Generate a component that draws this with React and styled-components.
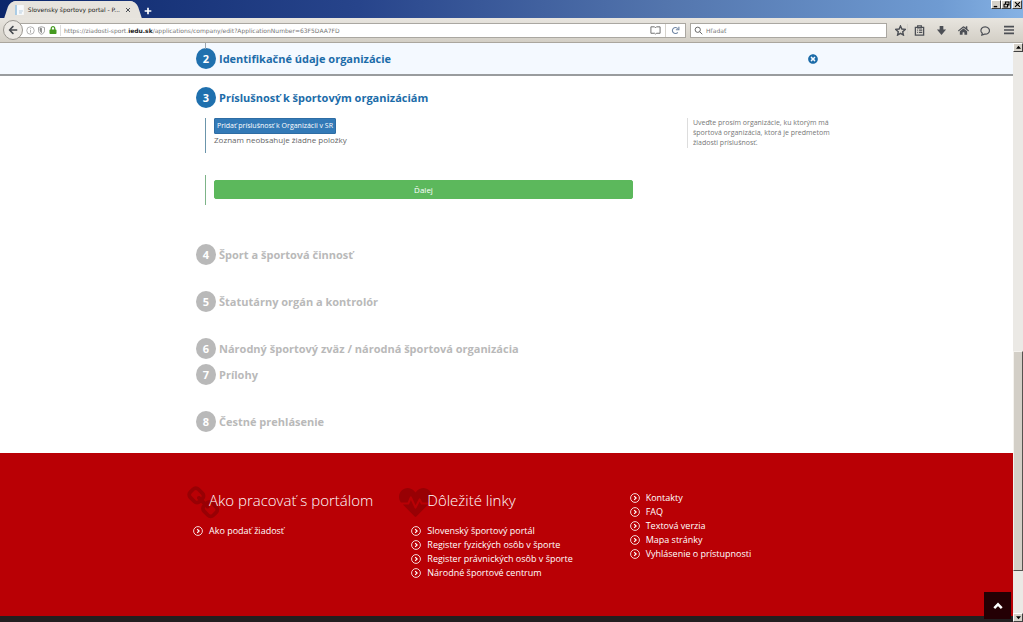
import React, { useState } from "react";
import styled, { createGlobalStyle, css } from "styled-components";
import {
  FaArrowLeft,
  FaHeartbeat,
  FaHome,
  FaLock,
  FaTimesCircle,
} from "react-icons/fa";

const GlobalStyle = createGlobalStyle`
  * {
    box-sizing: border-box;
  }

  body {
    margin: 0;
    background: #fff;
    font-family: "Open Sans", sans-serif;
    font-size: 8px;
    color: #666;
  }

  button, input {
    font-family: inherit;
    margin: 0;
  }
`;

const chromeFont = css`
  font-family: "DejaVu Sans", sans-serif;
  font-size: 6px;
`;

const URL_PARTS = [
  "https://ziadosti-sport.",
  "iedu.sk",
  "/applications/company/edit?ApplicationNumber=63F5DAA7FD",
];

const LOCKED_STEPS = [
  { number: 4, title: "Šport a športová činnosť" },
  { number: 5, title: "Štatutárny orgán a kontrolór" },
  { number: 6, title: "Národný športový zväz / národná športová organizácia" },
  { number: 7, title: "Prílohy", tight: true },
  { number: 8, title: "Čestné prehlásenie" },
];

const PORTAL_LINKS = ["Ako podať žiadosť"];

const IMPORTANT_LINKS = [
  "Slovenský športový portál",
  "Register fyzických osôb v športe",
  "Register právnických osôb v športe",
  "Národné športové centrum",
];

const SITE_LINKS = [
  "Kontakty",
  "FAQ",
  "Textová verzia",
  "Mapa stránky",
  "Vyhlásenie o prístupnosti",
];

/* Browser window */

const Window = styled.div`
  display: flex;
  flex-direction: column;
  height: 100vh;
  overflow: hidden;
`;

const TitleBar = styled.div`
  display: flex;
  align-items: flex-end;
  height: 18px;
  padding-left: 10px;
  flex: none;
  background: linear-gradient(to right, #0c276b, #27448b 35%, #5375ad 65%, #6f9bd2 92%, #86b2e4);
`;

const Tab = styled.div`
  position: relative;
  display: flex;
  align-items: center;
  gap: 4px;
  width: 126px;
  height: 17px;
  padding: 0 4px 0 5px;
  color: #222;
  background: #e6e3dd;
  border-radius: 6px 6px 0 0;
  ${chromeFont}

  &::before,
  &::after {
    content: "";
    position: absolute;
    bottom: 0;
    width: 12px;
    height: 17px;
    background: #e6e3dd;
  }

  &::before {
    left: -3px;
    border-top-left-radius: 6px;
    transform: skewX(-18deg);
  }

  &::after {
    right: -3px;
    border-top-right-radius: 6px;
    transform: skewX(18deg);
  }

  > * {
    position: relative;
    z-index: 1;
  }
`;

const TabTitle = styled.span`
  flex: 1;
  white-space: nowrap;
`;

const IconButton = styled.button`
  display: flex;
  align-items: center;
  justify-content: center;
  flex: none;
  width: ${(props) => props.$width || 12}px;
  height: 14px;
  padding: 0;
  border: 0;
  background: none;
  color: ${(props) => props.$color || "#4c4f55"};

  svg {
    display: block;
  }
`;

const WindowButtons = styled.div`
  display: flex;
  align-self: flex-start;
  margin-left: auto;
  padding-right: 1px;
`;

const WindowButton = styled.button`
  display: flex;
  align-items: center;
  justify-content: center;
  width: 10px;
  height: 9px;
  padding: 0;
  border: 1px solid;
  border-color: #fff #404040 #404040 #fff;
  background: #d6d2ca;

  &:last-child {
    margin-left: 1px;
  }
`;

const ScrollButton = styled(WindowButton)`
  &:last-child {
    margin-left: 0;
  }
`;

const Toolbar = styled.div`
  display: flex;
  align-items: center;
  height: 25px;
  padding: 0 1px 0 3px;
  flex: none;
  background: linear-gradient(#e8e5df, #d3cfc6);
  border-bottom: 1px solid #aaa69e;
`;

const BackButton = styled.button`
  display: flex;
  align-items: center;
  justify-content: center;
  position: relative;
  z-index: 1;
  flex: none;
  width: 20px;
  height: 20px;
  padding: 0;
  border: 1px solid #999690;
  border-radius: 50%;
  background: #ece9e4;
  color: #45494f;
`;

const AddressBar = styled.div`
  display: flex;
  align-items: center;
  flex: 1;
  height: 15px;
  margin-left: -4px;
  padding-left: 5px;
  border: 1px solid #aaa7a1;
  background: #fff;
`;

const AddressField = styled.div`
  display: grid;
  align-items: center;
  flex: 1;
  height: 11px;
  margin-left: 2px;
  padding-left: 3px;
  border-left: 1px solid #ddd;
  color: #777;
  ${chromeFont}

  > * {
    grid-area: 1 / 1;
  }
`;

const BareInput = styled.input`
  flex: 1;
  width: 100%;
  min-width: 0;
  padding: 0;
  border: 0;
  outline: 0;
  background: none;
  color: #555;
  font-size: inherit;

  &::placeholder {
    color: #777;
    opacity: 1;
  }
`;

const AddressText = styled.span`
  pointer-events: none;
  white-space: nowrap;

  strong {
    color: #222;
    font-weight: 600;
  }
`;

const SearchBar = styled.label`
  display: flex;
  align-items: center;
  gap: 3px;
  width: 197px;
  height: 15px;
  margin: 0 6px 0 4px;
  padding-left: 3px;
  border: 1px solid #aaa7a1;
  background: #fff;
  ${chromeFont}
`;

const Divider = styled.span`
  width: 1px;
  height: 13px;
  background: #d5d2cc;
`;

const ToolbarIcons = styled.div`
  display: flex;
  align-items: center;
`;

const Content = styled.div`
  display: grid;
  grid-template-columns: minmax(0, 1fr) 10px;
  flex: 1;
  min-height: 0;
`;

const Scrollbar = styled.div`
  display: flex;
  flex-direction: column;
  background: #ebe9e5;
`;

const ScrollTrack = styled.div`
  display: grid;
  grid-template-rows: 299fr 220fr 42fr;
  flex: 1;
`;

const ScrollThumb = styled.div`
  grid-row: 2;
  border: 1px solid;
  border-color: #f4f2ee #55534f #55534f #f4f2ee;
  background: #d3cfc7;
`;

/* Page */

const Page = styled.div`
  position: relative;
  display: flex;
  flex-direction: column;
  min-height: 0;
  overflow: hidden;
`;

const Container = styled.div`
  width: 100%;
  max-width: 655px;
  margin: 0 auto;
`;

const DoneStep = styled.section`
  flex: none;
  padding: 5px 0;
  background: #f4f9ff;
  border-bottom: 2px solid #999c9e;

  ${Container} {
    position: relative;
    display: flex;
    align-items: center;
    justify-content: space-between;
    padding-right: 16px;
  }

  ${Container}::before {
    content: "";
    position: absolute;
    top: -5px;
    left: 26px;
    width: 1px;
    height: 6px;
    background: #9aa5b0;
  }
`;

const StepHead = styled.div`
  display: flex;
  align-items: center;
  gap: 3px;
  height: 21px;
  padding-left: 17px;
  color: ${(props) => (props.$locked ? "#b9b9b9" : "#1c6ca9")};
`;

const StepNumber = styled.span`
  width: 20px;
  height: 21px;
  border-radius: 50%;
  background: ${(props) => (props.$locked ? "#b9b9b9" : "#1f70ae")};
  color: #fff;
  font-size: 11px;
  font-weight: 700;
  line-height: 21px;
  text-align: center;
`;

const StepTitle = styled.h2`
  margin: 0;
  font-size: 11px;
  font-weight: 700;
  line-height: 21px;
`;

const ActiveStep = styled.section`
  padding: 11px 0 13px;
`;

const StepBody = styled.div`
  display: grid;
  grid-template-columns: minmax(0, 1fr) 147px;
  gap: 22px 54px;
  margin-top: 10px;
  padding-left: 26px;
`;

const Fields = styled.div`
  min-height: ${(props) => (props.$final ? 30 : 35)}px;
  padding: ${(props) => (props.$final ? "5px 0 6px 8px" : "0 0 0 8px")};
  border-left: 1px solid ${(props) => (props.$final ? "#7db488" : "#6b95ab")};
`;

const Button = styled.button`
  display: block;
  padding: 0 2px;
  border: 1px solid #2e6da4;
  border-radius: 1px;
  background: #337ab7;
  color: #fff;
  font-size: 7px;
  line-height: 14px;

  ${(props) =>
    props.$wide &&
    css`
      width: 100%;
      border-color: #5cb85c;
      border-radius: 2px;
      background: #5cb85c;
      font-size: 8px;
      line-height: 17px;
    `}
`;

const EmptyNote = styled.p`
  margin: 0;
  line-height: 12px;
`;

const Help = styled.aside`
  align-self: start;
  padding-left: 5px;
  border-left: 1px solid #ddd;
  color: #777;
  font-size: 7px;
  line-height: 10px;
`;

const LockedSteps = styled.div`
  padding-bottom: 21px;
`;

const LockedStep = styled.section`
  padding-top: ${(props) => (props.$tight ? 5 : 26)}px;
`;

const Footer = styled.footer`
  flex: none;
  height: 163px;
  padding-top: 36px;
  background: #b90005;
  color: #fff;

  ${Container} {
    display: grid;
    grid-template-columns: repeat(3, 1fr);
  }
`;

const FooterTitle = styled.h3`
  position: relative;
  margin: 0 0 13px;
  padding-left: 30px;
  font-size: 15px;
  font-weight: 300;
  line-height: 22px;
  white-space: nowrap;

  svg {
    position: absolute;
    top: -3px;
    left: ${(props) => props.$iconLeft}px;
    color: #980004;
  }

  span {
    position: relative;
  }
`;

const LinkList = styled.ul`
  margin: 0;
  padding: ${(props) => (props.$untitled ? "2px 0 0 14px" : "0 0 0 14px")};
  list-style: none;
`;

const FooterLink = styled.a`
  display: flex;
  align-items: center;
  gap: 6px;
  color: #fff;
  font-size: 9px;
  line-height: 14px;
  text-decoration: none;
`;

const BottomBar = styled.div`
  flex: 1;
  background: #231f20;
`;

const ScrollTop = styled.button`
  position: absolute;
  right: 2px;
  bottom: 3px;
  display: flex;
  align-items: center;
  justify-content: center;
  width: 27px;
  height: 27px;
  padding: 0;
  border: 0;
  background: #240004;
  color: #fff;
`;

function Stroke({ size = 10, width = 1, view = 12, children }) {
  return (
    <svg
      width={size}
      height={size}
      viewBox={`0 0 ${view} ${view}`}
      fill="none"
      stroke="currentColor"
      strokeWidth={width}
      aria-hidden="true"
    >
      {children}
    </svg>
  );
}

function ChainIcon() {
  return (
    <svg width="35" height="35" viewBox="0 0 1792 1792" fill="currentColor" aria-hidden="true">
      <path d="M1456 1216q0-40-28-68l-208-208q-28-28-68-28-42 0-72 32 3 3 19 18.500t21.500 21.500 15 19 13 25.500 3.500 27.500q0 40-28 68t-68 28q-15 0-27.500-3.500t-25.500-13-19-15-21.500-21.500-18.500-19q-33 31-33 73 0 40 28 68l206 207q27 27 68 27 40 0 68-26l147-146q28-28 28-67zm-703-705q0-40-28-68l-206-207q-28-28-68-28-39 0-68 27l-147 146q-28 28-28 67 0 40 28 68l208 208q27 27 68 27 42 0 72-31-3-3-19-18.500t-21.500-21.500-15-19-13-25.500-3.500-27.500q0-40 28-68t68-28q15 0 27.500 3.500t25.500 13 19 15 21.500 21.500 18.500 19q33-31 33-73zm895 705q0 120-85 203l-147 146q-83 83-203 83-121 0-204-85l-206-207q-83-83-83-203 0-123 88-209l-88-88q-86 88-208 88-120 0-204-84l-208-208q-84-84-84-204t85-203l147-146q83-83 203-83 121 0 204 85l206 207q83 83 83 203 0 123-88 209l88 88q86-88 208-88 120 0 204 84l208 208q84 84 84 204z" />
    </svg>
  );
}

function AddressInput() {
  const [editing, setEditing] = useState(false);
  const [url, setUrl] = useState(URL_PARTS.join(""));

  return (
    <AddressField>
      <BareInput
        aria-label="Adresa"
        value={editing ? url : ""}
        onChange={(e) => setUrl(e.target.value)}
        onFocus={() => setEditing(true)}
        onBlur={() => setEditing(false)}
      />
      {!editing && (
        <AddressText>
          {URL_PARTS[0]}
          <strong>{URL_PARTS[1]}</strong>
          {URL_PARTS[2]}
        </AddressText>
      )}
    </AddressField>
  );
}

function BrowserHeader() {
  return (
    <>
      <TitleBar>
        <Tab>
          <svg width="9" height="10" viewBox="0 0 9 10" aria-hidden="true">
            <path d="M0 0h9v10H0z" fill="#f8fafc" />
            <path d="M0 0h2v10H0z" fill="#a9cbe4" />
            <path d="M4 6h4M4 8h3" stroke="#b5cbdc" />
          </svg>
          <TabTitle>Slovensky športovy portal - P...</TabTitle>
          <IconButton $width={8} aria-label="Zavrieť kartu">
            <Stroke size={6} width={2}><path d="M2 2l8 8M10 2l-8 8" /></Stroke>
          </IconButton>
        </Tab>
        <IconButton $width={24} $color="#fff" aria-label="Nová karta">
          <Stroke size={8} width={2.5}><path d="M6 1v10M1 6h10" /></Stroke>
        </IconButton>
        <WindowButtons>
          <WindowButton aria-label="Minimalizovať">
            <Stroke size={7} width={2} view={10}><path d="M1 8h5" stroke="#000" /></Stroke>
          </WindowButton>
          <WindowButton aria-label="Obnoviť">
            <Stroke size={7} width={1.5} view={10}>
              <path d="M3.500 4V1.500h5v4H7M1.500 4.500h5v4h-5z" stroke="#000" />
            </Stroke>
          </WindowButton>
          <WindowButton aria-label="Zavrieť">
            <Stroke size={7} width={1.6} view={10}><path d="M1.500 1.500l7 7M8.500 1.500l-7 7" stroke="#000" /></Stroke>
          </WindowButton>
        </WindowButtons>
      </TitleBar>
      <Toolbar>
        <BackButton aria-label="Späť"><FaArrowLeft size={10} /></BackButton>
        <AddressBar>
          <IconButton $width={11} $color="#999" aria-label="Informácie o stránke">
            <Stroke size={9}><circle cx="6" cy="6" r="5" /><path d="M6 5v4M6 3v1" /></Stroke>
          </IconButton>
          <IconButton $width={11} $color="#858585" aria-label="Ochrana">
            <Stroke size={9}>
              <path d="M6 1l4 1v4c0 2-1 4-4 5-3-1-4-3-4-5V2z" />
              <path d="M6 3v6c-1-1-2-2-2-4V3z" fill="currentColor" />
            </Stroke>
          </IconButton>
          <IconButton $width={11} $color="#459a20" aria-label="Zabezpečené">
            <FaLock size={8} />
          </IconButton>
          <AddressInput />
          <IconButton $width={20} $color="#666" aria-label="Čítačka">
            <Stroke size={11}><path d="M6 3L5 2H1v7h4l1 1 1-1h4V2H7L6 3" /></Stroke>
          </IconButton>
          <Divider />
          <IconButton $width={19} $color="#7187a5" aria-label="Obnoviť stránku">
            <Stroke size={9} width={1.5}><path d="M9 8.500A4 4 0 1 1 9 3.500M10.500 1v4h-4" /></Stroke>
          </IconButton>
        </AddressBar>
        <SearchBar>
          <Stroke size={9} width={1.3}><circle cx="5" cy="5" r="3.500" /><path d="M7.500 7.500L11 11" /></Stroke>
          <BareInput aria-label="Hľadať" placeholder="Hľadať" />
        </SearchBar>
        <ToolbarIcons>
          <IconButton $width={14} aria-label="Záložka">
            <Stroke size={11} width={1.5}>
              <path d="M6 1l1.500 3.400 3.700.4-2.800 2.500.8 3.700L6 9.100 2.800 11l.8-3.700L.8 4.800l3.700-.4z" />
            </Stroke>
          </IconButton>
          <Divider />
          <IconButton $width={22} aria-label="Záložky">
            <Stroke size={11} width={1.4}>
              <path d="M4 2.500H1.500v8.500h9V2.500H8M4 1h4v2H4zM3.500 5.500h1M5.500 5.500h3.500M3.500 8h1M5.500 8h3.500" />
            </Stroke>
          </IconButton>
          <IconButton $width={22} aria-label="Prevzaté súbory">
            <Stroke size={11} width={0}><path d="M4 1h4v4h3l-5 6-5-6h3z" fill="currentColor" /></Stroke>
          </IconButton>
          <IconButton $width={22} aria-label="Domov"><FaHome size={11} /></IconButton>
          <IconButton $width={22} aria-label="Chat">
            <Stroke size={11} width={1.3}><path d="M2.500 9A4.700 4 0 1 1 5 10L2 11z" /></Stroke>
          </IconButton>
          <IconButton $width={26} aria-label="Ponuka">
            <Stroke size={10} width={2}><path d="M0 2h12M0 6h12M0 10h12" /></Stroke>
          </IconButton>
        </ToolbarIcons>
      </Toolbar>
    </>
  );
}

function Step({ number, title, locked }) {
  return (
    <StepHead $locked={locked}>
      <StepNumber $locked={locked}>{number}</StepNumber>
      <StepTitle>{title}</StepTitle>
    </StepHead>
  );
}

function FooterLinks({ items, untitled }) {
  return (
    <LinkList $untitled={untitled}>
      {items.map((item) => (
        <li key={item}>
          <FooterLink href="#">
            <Stroke size={10}>
              <circle cx="6" cy="6" r="5.300" />
              <path d="M5 3.800L7.300 6 5 8.200" strokeWidth="1.500" />
            </Stroke>
            {item}
          </FooterLink>
        </li>
      ))}
    </LinkList>
  );
}

function App() {
  return (
    <Window>
      <GlobalStyle />
      <BrowserHeader />
      <Content>
        <Page>
          <DoneStep>
            <Container>
              <Step number={2} title="Identifikačné údaje organizácie" />
              <IconButton $color="#1c6ca9" $width={10} aria-label="Zrušiť">
                <FaTimesCircle size={10} />
              </IconButton>
            </Container>
          </DoneStep>
          <Container>
            <ActiveStep>
              <Step number={3} title="Príslušnosť k športovým organizáciám" />
              <StepBody>
                <Fields>
                  <Button>Pridať príslušnosť k Organizácii v SR</Button>
                  <EmptyNote>Zoznam neobsahuje žiadne položky</EmptyNote>
                </Fields>
                <Help>
                  Uveďte prosím organizácie, ku ktorým má športová organizácia, ktorá je
                  predmetom žiadosti príslušnosť.
                </Help>
                <Fields $final>
                  <Button $wide>Ďalej</Button>
                </Fields>
              </StepBody>
            </ActiveStep>
            <LockedSteps>
              {LOCKED_STEPS.map((step) => (
                <LockedStep key={step.number} $tight={step.tight}>
                  <Step number={step.number} title={step.title} locked />
                </LockedStep>
              ))}
            </LockedSteps>
          </Container>
          <Footer>
            <Container>
              <div>
                <FooterTitle $iconLeft={8}>
                  <ChainIcon />
                  <span>Ako pracovať s portálom</span>
                </FooterTitle>
                <FooterLinks items={PORTAL_LINKS} />
              </div>
              <div>
                <FooterTitle $iconLeft={2}>
                  <FaHeartbeat size={33} />
                  <span>Dôležité linky</span>
                </FooterTitle>
                <FooterLinks items={IMPORTANT_LINKS} />
              </div>
              <FooterLinks items={SITE_LINKS} untitled />
            </Container>
          </Footer>
          <BottomBar />
          <ScrollTop aria-label="Hore">
            <Stroke size={10} width={3}><path d="M1.500 8.500L6 4l4.500 4.500" /></Stroke>
          </ScrollTop>
        </Page>
        <Scrollbar>
          <ScrollButton aria-label="Posunúť nahor">
            <Stroke size={5} width={0}><path d="M0 9h12L6 2z" fill="#000" /></Stroke>
          </ScrollButton>
          <ScrollTrack><ScrollThumb /></ScrollTrack>
          <ScrollButton aria-label="Posunúť nadol">
            <Stroke size={5} width={0}><path d="M0 3h12l-6 7z" fill="#000" /></Stroke>
          </ScrollButton>
        </Scrollbar>
      </Content>
    </Window>
  );
}

export default App;
